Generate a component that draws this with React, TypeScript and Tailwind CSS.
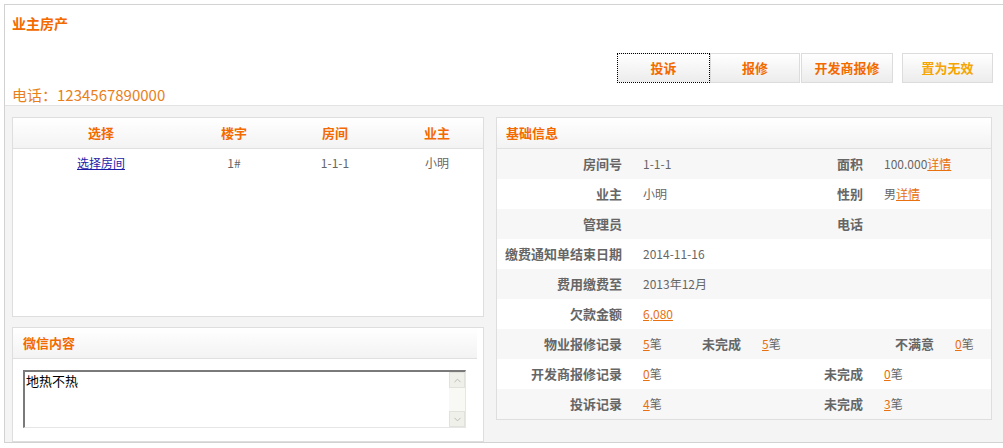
import { ChevronUp, ChevronDown } from 'lucide-react';

const Label = ({ text, className = '' }: { text: string; className?: string }) => (
  <div className={`shrink-0 text-right pr-[10px] font-bold text-[13px] text-[#666] ${className}`}>{text}</div>
);

const Count = ({ n }: { n: number }) => (
  <span>
    <a className="text-[#e8700e] underline">{n}</a>笔
  </span>
);

interface InfoRow {
  l1: string;
  v1?: React.ReactNode;
  l2?: string;
  v2?: React.ReactNode;
}

const rows: InfoRow[] = [
  { l1: '房间号', v1: '1-1-1', l2: '面积', v2: <>100.000<a className="text-[#e8700e] underline">详情</a></> },
  { l1: '业主', v1: '小明', l2: '性别', v2: <>男<a className="text-[#e8700e] underline">详情</a></> },
  { l1: '管理员', l2: '电话' },
  { l1: '缴费通知单结束日期', v1: '2014-11-16' },
  { l1: '费用缴费至', v1: '2013年12月' },
  { l1: '欠款金额', v1: <a className="text-[#e8700e] underline">6,080</a> },
];

const App = () => {
  return (
    <div className="w-[1003px] h-[448px] bg-white overflow-hidden pt-[4px] pl-[4px] font-['Noto_Sans_CJK_SC',sans-serif]">
      <div className="w-[1010px] border-t border-l border-b border-[#d2d2d2]">
        {/* header */}
        <div className="bg-white flex flex-col border-b border-[#e3e3e3] h-[101px]">
          <div className="mt-[8px] ml-[7px] h-[20px] leading-[20px] text-[14px] font-bold text-[#f26a00]">业主房产</div>
          <div className="mt-[20px] flex w-[999px] justify-end pr-[11px]">
            <button className="w-[93px] h-[30px] border border-dotted border-black bg-gradient-to-b from-white to-[#ececec] text-[13px] font-bold text-[#f26a00]">投诉</button>
            <button className="w-[90px] h-[30px] border border-[#dcdcdc] bg-gradient-to-b from-white to-[#ececec] text-[13px] font-bold text-[#f26a00]">报修</button>
            <button className="ml-[1px] w-[92px] h-[30px] border border-[#dcdcdc] bg-gradient-to-b from-white to-[#ececec] text-[13px] font-bold text-[#f26a00]">开发商报修</button>
            <button className="ml-[9px] w-[91px] h-[30px] border border-[#dcdcdc] bg-gradient-to-b from-white to-[#ececec] text-[13px] font-bold text-[#f5a400]">置为无效</button>
          </div>
          <div className="mt-[2px] ml-[7px] h-[20px] leading-[20px] text-[15px] text-[#e8801c]">电话：1234567890000</div>
        </div>

        {/* body */}
        <div className="bg-[#f4f4f4] flex items-start gap-[12px] pl-[7px] pt-[11px] pb-[1px] h-[336px]">
          <div className="w-[472px] flex flex-col gap-[10px]">
            {/* room table */}
            <div className="h-[200px] bg-white border border-[#dedede]">
              <div className="h-[31px] flex items-center bg-gradient-to-b from-white to-[#f3f3f3] border-b border-[#e0e0e0] text-[13px] font-bold text-[#f26a00]">
                <div className="w-[176px] text-center">选择</div>
                <div className="w-[90px] text-center">楼宇</div>
                <div className="w-[112px] text-center">房间</div>
                <div className="flex-1 text-center">业主</div>
              </div>
              <div className="h-[28px] flex items-center text-[12px] text-[#666]">
                <div className="w-[176px] text-center">
                  <a className="text-[#1c1ca8] underline">选择房间</a>
                </div>
                <div className="w-[90px] text-center">1#</div>
                <div className="w-[112px] text-center">1-1-1</div>
                <div className="flex-1 text-center">小明</div>
              </div>
            </div>

            {/* wechat content */}
            <div className="h-[115px] bg-white border border-[#dedede] flex flex-col">
              <div className="h-[31px] mr-[6px] flex items-center pl-[10px] bg-gradient-to-b from-white to-[#f3f3f3] border-b border-[#e0e0e0] text-[13px] font-bold text-[#f26a00]">
                微信内容
              </div>
              <div className="mt-[11px] ml-[10px] w-[443px] h-[58px] flex border-t-2 border-l-2 border-t-[#7a7a7a] border-l-[#7a7a7a] border-r border-b border-r-[#e6e6e6] border-b-[#e6e6e6]">
                <div className="flex-1 pl-[1px] text-[13px] leading-[18px] text-black">地热不热</div>
                <div className="w-[16px] flex flex-col bg-[#f8f8f4]">
                  <div className="h-[16px] flex items-center justify-center border border-[#e2e2dc] bg-[#f0f0ea]">
                    <ChevronUp size={11} className="text-[#b8b8b0]" />
                  </div>
                  <div className="flex-1" />
                  <div className="h-[16px] flex items-center justify-center border border-[#e2e2dc] bg-[#f0f0ea]">
                    <ChevronDown size={11} className="text-[#b8b8b0]" />
                  </div>
                </div>
              </div>
            </div>
          </div>

          {/* base info */}
          <div className="w-[496px] bg-white border border-[#dedede] flex flex-col">
            <div className="h-[31px] shrink-0 flex items-center pl-[9px] bg-gradient-to-b from-white to-[#f3f3f3] border-b border-[#e0e0e0] text-[13px] font-bold text-[#f26a00]">
              基础信息
            </div>
            {rows.map((r, i) => (
              <div key={r.l1} className={`h-[30px] shrink-0 flex items-center text-[12px] text-[#666] ${i % 2 === 0 ? 'bg-[#f7f7f7]' : 'bg-white'}`}>
                <Label text={r.l1} className="w-[135px]" />
                <div className="w-[121px] pl-[11px] whitespace-nowrap">{r.v1}</div>
                <Label text={r.l2 ?? ''} className="w-[120px]" />
                <div className="flex-1 pl-[11px]">{r.v2}</div>
              </div>
            ))}
            <div className="h-[30px] shrink-0 flex items-center text-[12px] text-[#666] bg-[#f7f7f7]">
              <Label text="物业报修记录" className="w-[135px]" />
              <div className="w-[60px] pl-[11px]"><Count n={5} /></div>
              <Label text="未完成" className="w-[59px]" />
              <div className="w-[93px] pl-[11px]"><Count n={5} /></div>
              <Label text="不满意" className="w-[100px]" />
              <div className="flex-1 pl-[11px]"><Count n={0} /></div>
            </div>
            <div className="h-[30px] shrink-0 flex items-center text-[12px] text-[#666] bg-white">
              <Label text="开发商报修记录" className="w-[135px]" />
              <div className="w-[121px] pl-[11px]"><Count n={0} /></div>
              <Label text="未完成" className="w-[120px]" />
              <div className="flex-1 pl-[11px]"><Count n={0} /></div>
            </div>
            <div className="h-[30px] shrink-0 flex items-center text-[12px] text-[#666] bg-[#f7f7f7]">
              <Label text="投诉记录" className="w-[135px]" />
              <div className="w-[121px] pl-[11px]"><Count n={4} /></div>
              <Label text="未完成" className="w-[120px]" />
              <div className="flex-1 pl-[11px]"><Count n={3} /></div>
            </div>
          </div>
        </div>
      </div>
    </div>
  );
};

export default App;
